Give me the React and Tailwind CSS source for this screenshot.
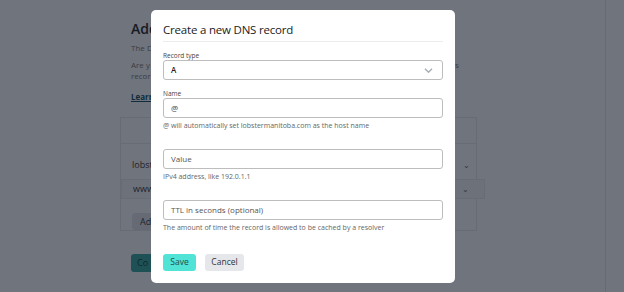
import React from "react";

const font = { fontFamily: '"Open Sans", "Noto Sans", Arial, sans-serif' };

const Field = ({ label, value, placeholder, select, helper }) => (
  <div>
    {label && <div className="text-[6.5px] leading-[8px] text-[#444]">{label}</div>}
    <div className="h-[20px] border border-[#bdbdbd] rounded-[3px] flex items-center justify-between pl-[7px] pr-[9px]">
      {value ? (
        <span className="text-[8px] font-semibold text-[#222]">{value}</span>
      ) : (
        <span className="text-[8px] text-[#555]">{placeholder}</span>
      )}
      {select && (
        <svg width="9" height="5" viewBox="0 0 9 5">
          <path d="M1 0.8l3.5 3.4 3.5-3.4" fill="none" stroke="#a7acb1" strokeWidth="1.4" />
        </svg>
      )}
    </div>
    {helper && <div className="text-[7px] leading-[8px] text-[#666] mt-[4px] whitespace-nowrap">{helper}</div>}
  </div>
);

export default function App() {
  return (
    <div className="relative w-[624px] h-[292px] overflow-hidden bg-white" style={font}>
      {/* page behind the dialog */}
      <div className="flex h-full">
        <div className="w-[606px] border-r border-[#e5e7eb] pl-[131px] pt-[18px]">
          <div className="w-[345px]">
            <div className="text-[14px] font-semibold text-[#222] leading-[22px]">Add</div>
            <div className="text-[8px] text-[#777] mt-[2px]">The D</div>
            <div className="flex text-[8px] text-[#777] mt-[5px] leading-[11px]">
              <span className="w-[324px]">
                Are y
                <br />
                recor
              </span>
              <span>s</span>
            </div>
            <div className="text-[8px] font-bold text-[#0f4c5c] underline mt-[10px]">Learn</div>
            <div className="mt-[14px] -ml-[11px] w-[357px] border border-[#e8e8e8] h-[114px] flex flex-col">
              <div className="h-[26px] border-b border-[#ececec]" />
              <div className="flex items-center justify-between pl-[11px] pr-[6px] mt-[15px] h-[12px]">
                <span className="text-[9px] text-[#333]">lobster</span>
                <span className="text-[8px] text-[#666]">⌄</span>
              </div>
              <div className="flex items-center justify-between pl-[11px] pr-[6px] mt-[8px] h-[20px] bg-[#f7f7f7] border border-[#ececec] mr-[-9px]">
                <span className="text-[9px] text-[#333]">www.</span>
                <span className="text-[8px] text-[#666] mr-[9px]">⌄</span>
              </div>
              <div className="ml-[11px] mt-[14px] w-[40px] h-[17px] bg-[#e5e7eb] rounded-[3px] text-[9px] text-[#333] flex items-center pl-[8px]">Add</div>
            </div>
            <div className="mt-[23px] w-[60px] h-[18px] bg-[#34a89c] rounded-[3px] text-[9px] text-[#0d3d38] flex items-center pl-[6px]">Co</div>
          </div>
        </div>
        <div className="flex-1" />
      </div>

      {/* overlay + dialog */}
      <div className="absolute inset-0 bg-[#111827]/60">
        <div className="ml-[151px] mt-[10px] w-[304px] h-[273px] bg-white rounded-[5px] px-[12px] pt-[11px]">
          <div className="text-[11.5px] tracking-[-0.2px] leading-[18px] text-[#222] pb-[2px] border-b border-[#ececec]">
            Create a new DNS record
          </div>
          <div className="mt-[10px]">
            <Field label="Record type" value="A" select />
          </div>
          <div className="mt-[10px]">
            <Field label="Name" value={<span className="font-normal text-[#444]">@</span>} helper="@ will automatically set lobstermanitoba.com as the host name" />
          </div>
          <div className="mt-[19px]">
            <Field placeholder="Value" helper="IPv4 address, like 192.0.1.1" />
          </div>
          <div className="mt-[19px]">
            <Field placeholder="TTL in seconds (optional)" helper="The amount of time the record is allowed to be cached by a resolver" />
          </div>
          <div className="flex gap-[9px] mt-[22px]">
            <button className="w-[33px] h-[17px] bg-[#52e3d7] rounded-[3px] text-[8.5px] text-[#1c4f4b]">Save</button>
            <button className="w-[39px] h-[17px] bg-[#e5e7eb] rounded-[3px] text-[8.5px] text-[#333]">Cancel</button>
          </div>
        </div>
      </div>
    </div>
  );
}
